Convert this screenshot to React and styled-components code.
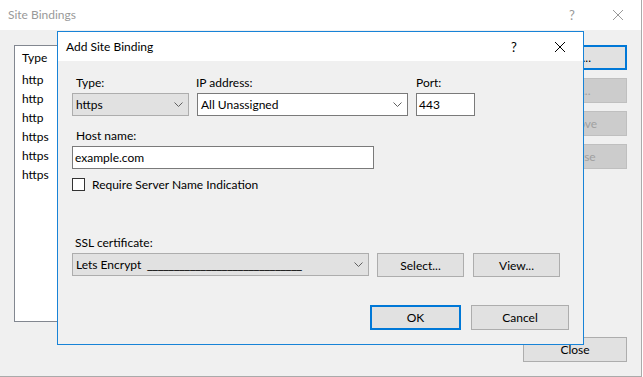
import React from 'react';
import styled, { createGlobalStyle } from 'styled-components';

const GlobalStyle = createGlobalStyle`
  * {
    margin: 0;
    padding: 0;
    box-sizing: border-box;
  }

  body {
    width: 643px;
    height: 377px;
    overflow: hidden;
    background: #ffffff;
    font-family: "Segoe UI", Lato, "Noto Sans", sans-serif;
    font-size: 12px;
    color: #000;
  }
`;

const Desktop = styled.div`
  position: relative;
  width: 643px;
  height: 377px;
  overflow: hidden;
`;

const Window = styled.div`
  width: 642px;
  height: 377px;
  display: flex;
  flex-direction: column;
  border-right: 1px solid #aaaaaa;
  border-bottom: 1px solid #aaaaaa;
`;

const TitleBar = styled.div`
  height: ${p => p.$height}px;
  flex-shrink: 0;
  display: flex;
  align-items: center;
  background: #fff;
  color: ${p => (p.$inactive ? '#999999' : '#000')};
`;

const TitleText = styled.span`
  padding-left: 8px;
  line-height: 16px;
`;

const CaptionButtons = styled.div`
  margin-left: auto;
  display: flex;
  height: 100%;
`;

const CaptionButton = styled.div`
  width: 46px;
  height: 100%;
  display: flex;
  align-items: center;
  justify-content: center;
  font-size: 13px;
`;

const WindowBody = styled.div`
  flex: 1;
  background: #f0f0f0;
  padding: 15px 14px 14px 14px;
  display: grid;
  grid-template-columns: 1fr 102px;
  grid-template-rows: 1fr auto;
  column-gap: 11px;
  row-gap: 15px;
`;

const ListBox = styled.div`
  background: #fff;
  border: 1px solid #828790;
`;

const ListHeader = styled.div`
  height: 24px;
  line-height: 24px;
  padding-left: 7px;
`;

const ListRow = styled.div`
  height: 19px;
  line-height: 19px;
  padding-left: 7px;
`;

const SideButtons = styled.div`
  display: flex;
  flex-direction: column;
  gap: 8px;
`;

const Button = styled.div`
  width: ${p => p.$width || 102}px;
  height: ${p => p.$height || 25}px;
  margin-left: ${p => p.$gap || 0}px;
  display: flex;
  align-items: center;
  justify-content: center;
  flex-shrink: 0;
  background: ${p => (p.$disabled ? '#cccccc' : '#e1e1e1')};
  border: ${p => (p.$focused ? '2px solid #0078d7' : p.$disabled ? '1px solid #bfbfbf' : '1px solid #adadad')};
  color: ${p => (p.$disabled ? '#a0a0a0' : '#000')};
`;

const CloseCell = styled.div`
  grid-column: 2;
  display: flex;
  justify-content: flex-end;
`;

const Dialog = styled.div`
  position: absolute;
  left: 57px;
  top: 31px;
  width: 527px;
  height: 314px;
  border: 1px solid #1883d7;
  display: flex;
  flex-direction: column;
  background: #f0f0f0;
`;

const DialogBody = styled.div`
  flex: 1;
  padding: 14px 14px 0 14px;
  display: flex;
  flex-direction: column;
`;

const FieldRow = styled.div`
  display: grid;
  grid-template-columns: 117px 211px 59px;
  column-gap: 8px;
`;

const Field = styled.div`
  display: flex;
  flex-direction: column;
  margin-top: ${p => p.$top || 0}px;
`;

const Label = styled.div`
  line-height: 15px;
  height: 15px;
  margin-bottom: 3px;
  margin-left: ${p => p.$indent ?? 4}px;
`;

const Combo = styled.div`
  width: ${p => p.$width}px;
  height: 23px;
  display: flex;
  align-items: center;
  padding: 0 5px 0 3px;
  background: ${p => (p.$editable ? '#fff' : '#e1e1e1')};
  border: 1px solid ${p => (p.$editable ? '#7a7a7a' : '#adadad')};
  white-space: pre;
  svg {
    margin-left: auto;
  }
`;

const Blank = styled.span`
  font-family: "Noto Sans", sans-serif;
  margin-left: 6px;
`;

const TextBox = styled.div`
  width: ${p => p.$width}px;
  height: 23px;
  display: flex;
  align-items: center;
  padding-left: 2px;
  background: #fff;
  border: 1px solid #7a7a7a;
`;

const CheckRow = styled.div`
  display: flex;
  align-items: center;
  gap: 7px;
  margin-top: 8px;
  height: 15px;
  line-height: 15px;
`;

const CheckBox = styled.div`
  width: 13px;
  height: 13px;
  background: #fff;
  border: 1px solid #333333;
`;

const CertRow = styled.div`
  display: flex;
  align-items: flex-start;
`;

const Footer = styled.div`
  display: flex;
  justify-content: flex-end;
  gap: 10px;
  margin-top: 28px;
`;

const Chevron = () => (
  <svg width="9" height="5" viewBox="0 0 9 5">
    <path d="M0.5 0.5 L4.5 4.5 L8.5 0.5" fill="none" stroke="#606060" strokeWidth="1" />
  </svg>
);

const CloseGlyph = ({ color }) => (
  <svg width="10" height="10" viewBox="0 0 10 10">
    <path d="M0 0 L10 10 M10 0 L0 10" stroke={color} strokeWidth="1" />
  </svg>
);

const rows = ['http', 'http', 'http', 'https', 'https', 'https'];

const App = () => (
  <>
    <GlobalStyle />
    <Desktop>
      <Window>
        <TitleBar $height={30} $inactive>
          <TitleText>Site Bindings</TitleText>
          <CaptionButtons>
            <CaptionButton>?</CaptionButton>
            <CaptionButton><CloseGlyph color="#999999" /></CaptionButton>
          </CaptionButtons>
        </TitleBar>
        <WindowBody>
          <ListBox>
            <ListHeader>Type</ListHeader>
            {rows.map((r, i) => (
              <ListRow key={i}>{r}</ListRow>
            ))}
          </ListBox>
          <SideButtons>
            <Button $focused>Add...</Button>
            <Button $disabled>Edit...</Button>
            <Button $disabled>Remove</Button>
            <Button $disabled>Browse</Button>
          </SideButtons>
          <CloseCell>
            <Button $width={104}>Close</Button>
          </CloseCell>
        </WindowBody>
      </Window>

      <Dialog>
        <TitleBar $height={29}>
          <TitleText>Add Site Binding</TitleText>
          <CaptionButtons>
            <CaptionButton>?</CaptionButton>
            <CaptionButton><CloseGlyph color="#000" /></CaptionButton>
          </CaptionButtons>
        </TitleBar>
        <DialogBody>
          <FieldRow>
            <Field>
              <Label>Type:</Label>
              <Combo $width={117}>https<Chevron /></Combo>
            </Field>
            <Field>
              <Label $indent={-1}>IP address:</Label>
              <Combo $width={211} $editable>All Unassigned<Chevron /></Combo>
            </Field>
            <Field>
              <Label $indent={0}>Port:</Label>
              <TextBox $width={59}>443</TextBox>
            </Field>
          </FieldRow>
          <Field $top={12}>
            <Label>Host name:</Label>
            <TextBox $width={302}>example.com</TextBox>
          </Field>
          <CheckRow>
            <CheckBox />
            <span>Require Server Name Indication</span>
          </CheckRow>
          <Field $top={43}>
            <Label $indent={3}>SSL certificate:</Label>
            <CertRow>
              <Combo $width={297}>
                Lets Encrypt
                <Blank>_____________________________</Blank>
                <Chevron />
              </Combo>
              <Button $width={87} $height={24} $gap={8}>Select...</Button>
              <Button $width={87} $height={24} $gap={9}>View...</Button>
            </CertRow>
          </Field>
          <Footer>
            <Button $width={91} $focused>OK</Button>
            <Button $width={98}>Cancel</Button>
          </Footer>
        </DialogBody>
      </Dialog>
    </Desktop>
  </>
);

export default App;
